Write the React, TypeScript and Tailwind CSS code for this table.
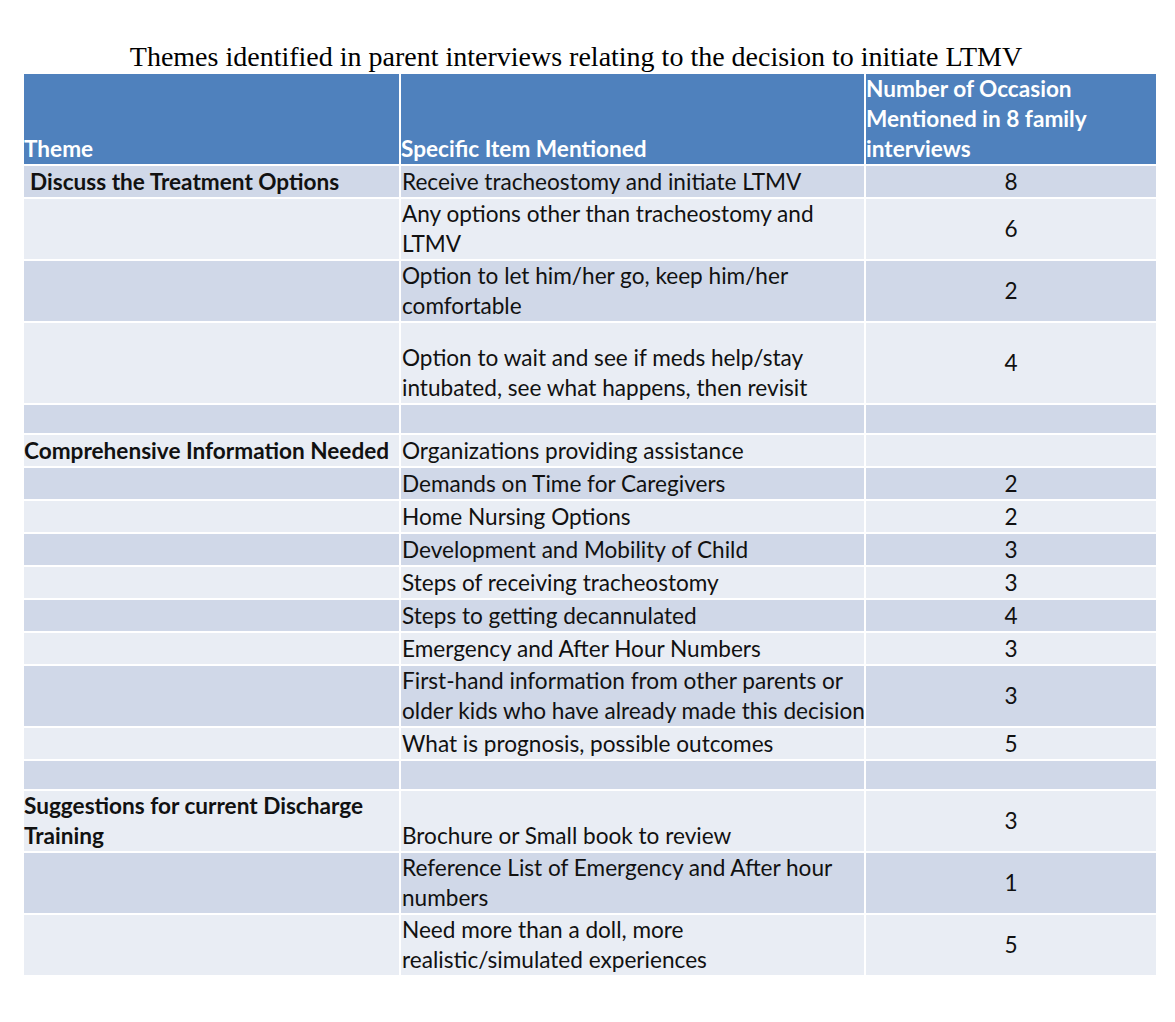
import React from "react";

type Row = {
  theme?: string;
  item?: string[];
  count?: string;
  h: string;
  dark: boolean;
  indent?: boolean;
};

const rows: Row[] = [
  { theme: "Discuss the Treatment Options", item: ["Receive tracheostomy and initiate LTMV"], count: "8", h: "h-[31px]", dark: true, indent: true },
  { item: ["Any options other than tracheostomy and", "LTMV"], count: "6", h: "h-[60px]", dark: false },
  { item: ["Option to let him/her go, keep him/her", "comfortable"], count: "2", h: "h-[60px]", dark: true },
  { item: ["Option to wait and see if meds help/stay", "intubated, see what happens, then revisit"], count: "4", h: "h-[80px]", dark: false },
  { h: "h-[28px]", dark: true },
  { theme: "Comprehensive Information Needed", item: ["Organizations providing assistance"], h: "h-[31px]", dark: false },
  { item: ["Demands on Time for Caregivers"], count: "2", h: "h-[31px]", dark: true },
  { item: ["Home Nursing Options"], count: "2", h: "h-[31px]", dark: false },
  { item: ["Development and Mobility of Child"], count: "3", h: "h-[31px]", dark: true },
  { item: ["Steps of receiving tracheostomy"], count: "3", h: "h-[31px]", dark: false },
  { item: ["Steps to getting decannulated"], count: "4", h: "h-[31px]", dark: true },
  { item: ["Emergency and After Hour Numbers"], count: "3", h: "h-[31px]", dark: false },
  { item: ["First-hand information from other parents or", "older kids who have already made this decision"], count: "3", h: "h-[60px]", dark: true },
  { item: ["What is prognosis, possible outcomes"], count: "5", h: "h-[31px]", dark: false },
  { h: "h-[28px]", dark: true },
  { theme: "Suggestions for current Discharge Training", item: ["Brochure or Small book to review"], count: "3", h: "h-[60px]", dark: false },
  { item: ["Reference List of Emergency and After hour", "numbers"], count: "1", h: "h-[60px]", dark: true },
  { item: ["Need more than a doll, more", "realistic/simulated experiences"], count: "5", h: "h-[60px]", dark: false },
];

const App = () => {
  return (
    <div className="min-h-screen bg-white pt-[40px] pl-[24px]">
      <div className="w-[1132px] flex justify-center pr-[28px]">
        <h1 className="font-['Liberation_Serif',serif] text-[28px] leading-[34px] text-black">
          Themes identified in parent interviews relating to the decision to initiate LTMV
        </h1>
      </div>
      <div className="grid grid-cols-[375px_463px_290px] gap-x-[2px] font-['Lato',sans-serif] text-[22.6px] leading-[30px] text-[#111]">
        <div className="h-[90px] bg-[#4f81bd] flex items-end font-bold text-white">Theme</div>
        <div className="h-[90px] bg-[#4f81bd] flex items-end font-bold text-white">Specific Item Mentioned</div>
        <div className="h-[90px] bg-[#4f81bd] flex items-end pr-[60px] font-bold text-white">
          Number of Occasion Mentioned in 8 family interviews
        </div>
        <div className="col-span-3 h-[2px]" />
        {rows.map((r, i) => {
          const bg = r.dark ? "bg-[#d0d8e8]" : "bg-[#e9edf4]";
          return (
            <React.Fragment key={i}>
              <div className={`${r.h} ${bg} flex items-end pr-[4px] font-bold ${r.indent ? "pl-[6px]" : ""} ${i > 0 ? "mt-[2px]" : ""}`}>
                <span className={r.theme === "Comprehensive Information Needed" ? "whitespace-nowrap" : ""}>{r.theme}</span>
              </div>
              <div className={`${r.h} ${bg} flex flex-col justify-end pl-[1px] ${i > 0 ? "mt-[2px]" : ""}`}>
                {r.item?.map((line) => (
                  <span key={line} className="whitespace-nowrap">{line}</span>
                ))}
              </div>
              <div className={`${r.h} ${bg} flex items-center justify-center ${i > 0 ? "mt-[2px]" : ""}`}>{r.count}</div>
            </React.Fragment>
          );
        })}
      </div>
    </div>
  );
};

export default App;
